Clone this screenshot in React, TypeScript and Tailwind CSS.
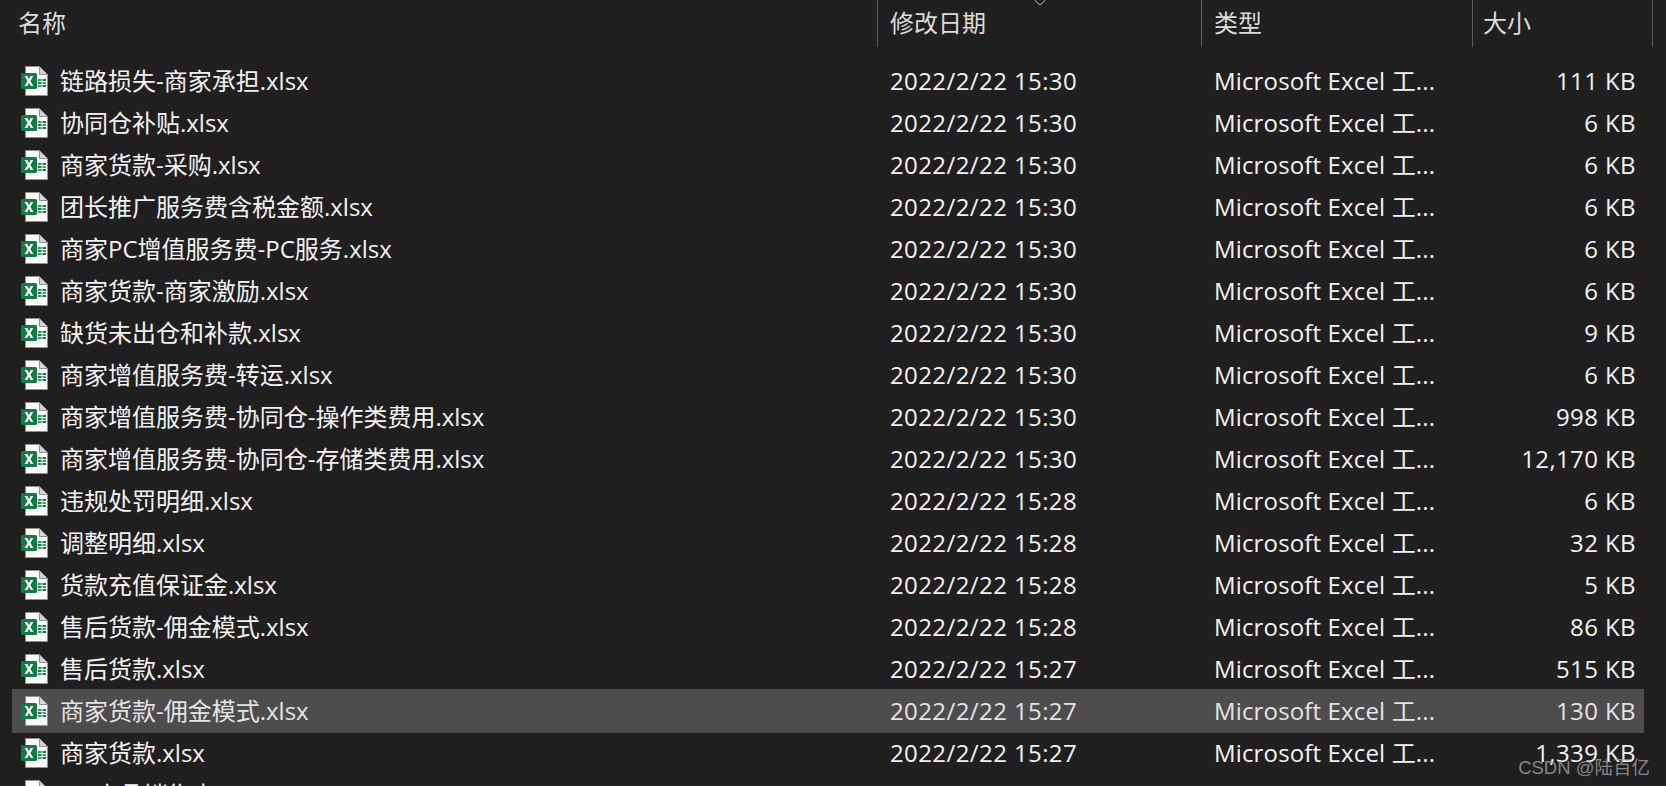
const rows: [string, string, string, boolean?][] = [
  ["链路损失-商家承担.xlsx", "2022/2/22 15:30", "111 KB"],
  ["协同仓补贴.xlsx", "2022/2/22 15:30", "6 KB"],
  ["商家货款-采购.xlsx", "2022/2/22 15:30", "6 KB"],
  ["团长推广服务费含税金额.xlsx", "2022/2/22 15:30", "6 KB"],
  ["商家PC增值服务费-PC服务.xlsx", "2022/2/22 15:30", "6 KB"],
  ["商家货款-商家激励.xlsx", "2022/2/22 15:30", "6 KB"],
  ["缺货未出仓和补款.xlsx", "2022/2/22 15:30", "9 KB"],
  ["商家增值服务费-转运.xlsx", "2022/2/22 15:30", "6 KB"],
  ["商家增值服务费-协同仓-操作类费用.xlsx", "2022/2/22 15:30", "998 KB"],
  ["商家增值服务费-协同仓-存储类费用.xlsx", "2022/2/22 15:30", "12,170 KB"],
  ["违规处罚明细.xlsx", "2022/2/22 15:28", "6 KB"],
  ["调整明细.xlsx", "2022/2/22 15:28", "32 KB"],
  ["货款充值保证金.xlsx", "2022/2/22 15:28", "5 KB"],
  ["售后货款-佣金模式.xlsx", "2022/2/22 15:28", "86 KB"],
  ["售后货款.xlsx", "2022/2/22 15:27", "515 KB"],
  ["商家货款-佣金模式.xlsx", "2022/2/22 15:27", "130 KB", true],
  ["商家货款.xlsx", "2022/2/22 15:27", "1,339 KB"],
  ["99-商品销售表.xlsx", "2022/2/22 15:26", "11 KB"],
];

function ExcelIcon() {
  return (
    <svg width="27" height="30" viewBox="0 0 27 30" className="shrink-0">
      <path d="M4.5 0.5H18.5L26.5 8.5V29.5H4.5Z" fill="#fbfbfb" stroke="#8f8f8f" />
      <path d="M18.5 0.5V8.5H26.5Z" fill="#d4d4d4" stroke="#8f8f8f" />
      <rect x="17" y="13" width="3.5" height="2" fill="#21a366" />
      <rect x="21.5" y="13" width="3.5" height="2" fill="#107c41" />
      <rect x="17" y="16" width="3.5" height="2" fill="#107c41" />
      <rect x="21.5" y="16" width="3.5" height="2" fill="#33a971" />
      <rect x="17" y="19" width="3.5" height="2" fill="#21a366" />
      <rect x="21.5" y="19" width="3.5" height="2" fill="#107c41" />
      <rect x="0" y="7" width="16" height="16" rx="1.5" fill="#107c41" />
      <path d="M3.6 10H6.3L8 13.2L9.7 10H12.3L9.4 15L12.4 20H9.7L8 16.8L6.3 20H3.6L6.6 15Z" fill="#fff" />
    </svg>
  );
}

export default function App() {
  return (
    <div className="relative h-[786px] w-[1666px] overflow-hidden bg-[#202020] text-[24px] text-[#f3f3f3] [font-family:'Open_Sans','Noto_Sans_CJK_SC',sans-serif]">
      <svg width="12" height="6" viewBox="0 0 12 6" className="absolute left-[1034px] top-0">
        <path d="M0.5 0L6 5L11.5 0" fill="none" stroke="#bdbdbd" />
      </svg>
      <div className="flex h-[47px] text-[#dcdcdc]">
        <div className="flex w-[877px] items-center pl-[18px] pb-[1px]">名称</div>
        <div className="flex w-[324px] items-center border-l border-[#5a5a5a] pl-[12px] pb-[1px]">修改日期</div>
        <div className="flex w-[271px] items-center border-l border-[#5a5a5a] pl-[12px] pb-[1px]">类型</div>
        <div className="flex w-[181px] items-center border-x border-[#5a5a5a] pl-[10px] pb-[1px]">大小</div>
      </div>
      <div className="pt-[13px] pl-[12px] pr-[22px]">
        {rows.map(([name, date, size, selected]) => (
          <div
            key={name}
            className={`flex items-center whitespace-nowrap ${selected ? "relative -my-[1px] h-[44px] bg-[#4d4d4d] text-[#e4e4e4]" : "h-[42px]"}`}
          >
            <div className="flex w-[878px] items-center gap-[12px] pl-[9px]">
              <ExcelIcon />
              <span>{name}</span>
            </div>
            <div className="w-[324px] tracking-[0.4px]">{date}</div>
            <div className="w-[270px] tracking-[0.15px]">Microsoft Excel 工...</div>
            <div className="w-[152px] text-right tracking-[0.4px]">{size}</div>
          </div>
        ))}
      </div>
      <div className="absolute right-[16px] top-[754px] text-[18.5px] text-[#a0a0a0]/80 [font-family:'Liberation_Sans','Noto_Sans_CJK_SC',sans-serif]">
        CSDN @陆百亿
      </div>
    </div>
  );
}
